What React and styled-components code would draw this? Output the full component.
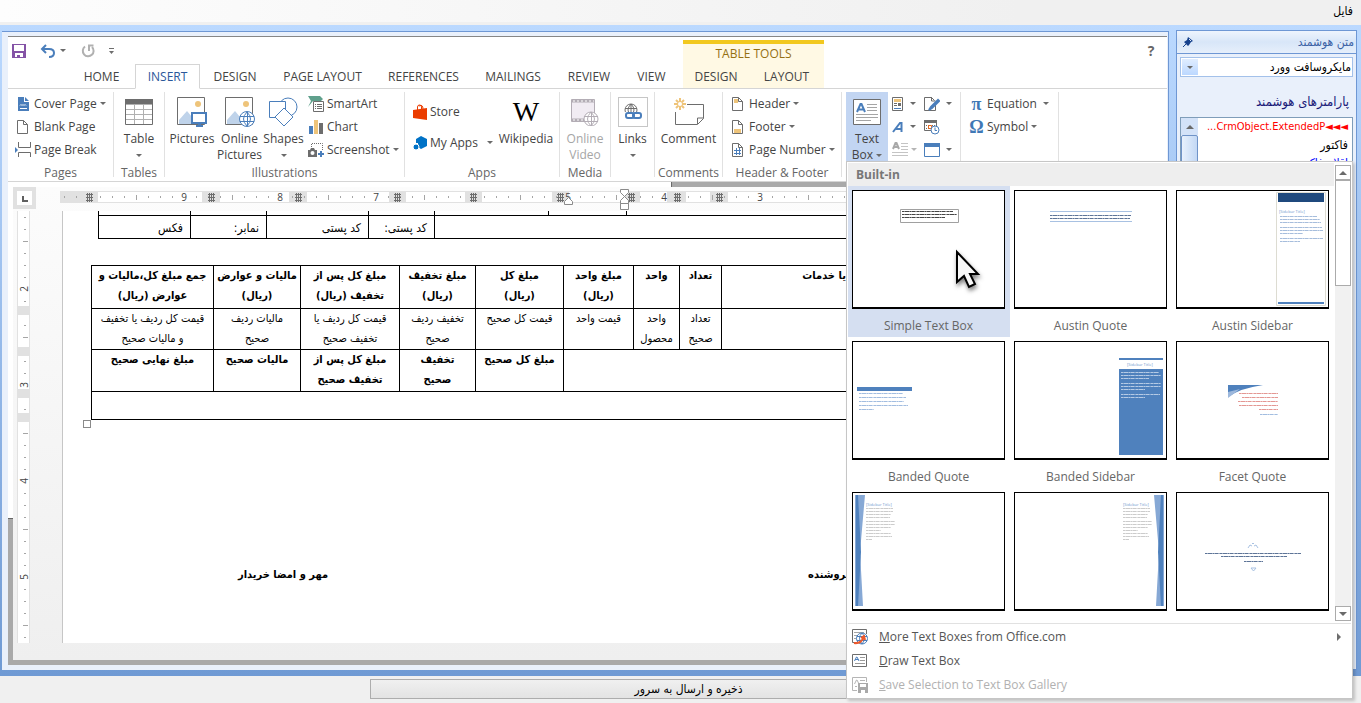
import React from "react";
import styled, { createGlobalStyle, css } from "styled-components";

const UI = '"Open Sans", "Noto Sans", sans-serif';
const FA = '"DejaVu Sans Condensed", "DejaVu Sans", sans-serif';

const GlobalStyle = createGlobalStyle`
  *, *::before, *::after { box-sizing: border-box; }
  body { margin: 0; font-family: ${UI}; font-size: 12px; color: #444; background: #f0f0f0; }
  button, select { font: inherit; color: inherit; }
  ul { list-style: none; margin: 0; padding: 0; }
`;

/* ---------- window shell ---------- */

const Shell = styled.div`
  display: flex;
  flex-direction: column;
  min-height: 100vh;
`;

const MenuBar = styled.nav`
  display: flex;
  justify-content: flex-end;
  align-items: center;
  height: 25px;
  padding: 0 8px;
  border-bottom: 3px solid #f0f0f0;
  background: linear-gradient(to right, #fdfdfd, #f0f0f0 75%);
  font-family: ${FA};
`;

const MenuBarItem = styled.button`
  border: 0;
  padding: 0;
  background: none;
  font-size: 12px;
  line-height: 16px;
  color: #000;
`;

const WorkArea = styled.main`
  flex: 1;
  display: flex;
  gap: 7px;
  padding: 5px 4px 6px 2px;
  background: linear-gradient(#bbd9ff, #6f9ad4);
`;

const EditorPane = styled.section`
  flex: 1;
  min-width: 0;
  display: flex;
  margin-top: 1px;
  padding: 4px 1px 5px 6px;
  border-top: 1px solid #6e97d4;
  border-right: 1px solid #6e97d4;
  background: #e9f0fb;
`;

const Word = styled.div`
  flex: 1;
  min-width: 0;
  display: flex;
  flex-direction: column;
  border-top: 1px solid #868686;
  background: #fff;
`;

const Footer = styled.footer`
  display: flex;
  justify-content: center;
  height: 27px;
  padding: 3px 0 4px 16px;
  background: #f0f0f0;
`;

const SaveButton = styled.button`
  width: 637px;
  max-width: 100%;
  padding: 0;
  border: 1px solid #adadad;
  background: linear-gradient(#f0f0f0, #e3e3e3);
  font-family: ${FA};
  font-size: 12px;
  line-height: 16px;
  color: #000;
`;

/* ---------- title row and tabs ---------- */

const TitleArea = styled.header`
  display: grid;
  grid-template-columns: 675px 141px 1fr;
  grid-template-rows: 27px 25px;
  background: linear-gradient(#d5d5d5, #d5d5d5) 0 100% / 100% 1px no-repeat;
`;

const QuickBar = styled.div`
  display: flex;
  align-items: center;
  padding: 0 0 0 4px;
`;

const QuickButton = styled.button`
  display: flex;
  align-items: center;
  gap: 4px;
  width: ${(p) => p.$w}px;
  height: 24px;
  padding: 0;
  border: 0;
  background: none;
`;

const HelpButton = styled.button`
  justify-self: end;
  width: 20px;
  margin-right: 6px;
  padding: 0;
  border: 0;
  background: none;
  font-size: 14px;
  font-weight: 700;
  color: #666;
`;

const Tabs = styled.div`
  display: flex;
  grid-column: 1;
  grid-row: 2;
  padding-left: 60px;
`;

const Tab = styled.button`
  width: ${(p) => p.$w}px;
  height: 25px;
  padding: 0;
  border: 1px solid transparent;
  background: none;
  font-size: 12px;
  line-height: 16px;
  color: #444;
  white-space: nowrap;
  ${(p) =>
    p.$active &&
    css`
      color: #2b579a;
      background: #fff;
      border-color: #d5d5d5;
      border-bottom-color: #fff;
    `}
`;

const ContextTabs = styled.div`
  grid-column: 2;
  grid-row: 1 / 3;
  display: flex;
  flex-direction: column;
  justify-content: space-between;
  margin: 3px 0 0;
  padding-bottom: 0;
  border-top: 4px solid #f2c81e;
  border-bottom: 1px solid #d5d5d5;
  background: #fff9e4;
`;

const ContextTitle = styled.div`
  font-size: 12px;
  line-height: 20px;
  text-align: center;
  color: #957012;
`;

const ContextRow = styled.div`
  display: flex;
  height: 24px;
`;

/* ---------- ribbon ---------- */

const Ribbon = styled.div`
  display: flex;
  padding: 3px 0 4px;
  border-bottom: 1px solid #d5d5d5;
`;

const Group = styled.section`
  flex: none;
  display: flex;
  flex-direction: column;
  width: ${(p) => p.$w}px;
  height: 85px;
  border-right: 1px solid #e1e1e1;
`;

const GroupBody = styled.div`
  flex: none;
  display: flex;
  height: 73px;
  padding-left: ${(p) => p.$pad || 0}px;
  justify-content: ${(p) => (p.$center ? "center" : "flex-start")};
`;

const GroupName = styled.h2`
  flex: none;
  margin: 0;
  font-size: 12px;
  font-weight: 400;
  line-height: 16px;
  text-align: center;
  color: #666;
  white-space: nowrap;
`;

const Stack = styled.div`
  display: flex;
  flex-direction: column;
  padding-top: ${(p) => p.$top || 0}px;
  margin-left: ${(p) => p.$left || 0}px;
`;

const SmallButton = styled.button`
  display: flex;
  align-items: center;
  gap: 3px;
  height: ${(p) => p.$h || 23}px;
  padding: 0;
  border: 0;
  background: none;
  font-size: 12px;
  line-height: 16px;
  color: ${(p) => (p.disabled ? "#a6a6a6" : "#444")};
  white-space: nowrap;
`;

const LargeButton = styled.button`
  display: flex;
  flex-direction: column;
  align-items: center;
  width: ${(p) => p.$w}px;
  height: 69px;
  padding: 4px 0 0;
  border: 0;
  background: ${(p) => (p.$on ? "#c2d5f2" : "none")};
  font-size: 12px;
  line-height: 16px;
  color: ${(p) => (p.disabled ? "#a6a6a6" : "#444")};
  white-space: nowrap;
`;

const LargeIcon = styled.span`
  flex: none;
  display: flex;
  align-items: center;
  justify-content: center;
  height: 32px;
  margin-bottom: 3px;
`;

const CaretLine = styled.span`
  flex: none;
  display: flex;
  align-items: center;
  gap: 3px;
  height: 16px;
`;

const Caret = styled.span`
  flex: none;
  width: 0;
  height: 0;
  margin-left: ${(p) => p.$gap || 0}px;
  border: 3px solid transparent;
  border-top-color: ${(p) => (p.$dim ? "#b5b5b5" : "#6a6a6a")};
  border-bottom: 0;
`;

const Glyph = styled.svg`
  flex: none;
  display: block;
`;

const SideRulerGlyph = styled(Glyph)`
  overflow: visible;
`;

const WikiMark = styled.span`
  font-family: "Liberation Serif", serif;
  font-size: 28px;
  line-height: 32px;
  color: #000;
`;

const LinkFrame = styled.span`
  display: flex;
  align-items: center;
  justify-content: center;
  width: 30px;
  height: 30px;
  border: 1px solid #c6c6c6;
`;

const MathMark = styled.span`
  width: 15px;
  font-family: "Liberation Serif", serif;
  font-size: 18px;
  font-weight: 700;
  line-height: 20px;
  color: #3f78b5;
`;

const MenuAnchor = styled.div`
  position: relative;
  height: 69px;
`;

/* ---------- text box gallery ---------- */

const Gallery = styled.div`
  position: absolute;
  z-index: 5;
  top: 100%;
  left: 0;
  width: 507px;
  padding: 1px;
  border: 1px solid #c6c6c6;
  background: #fff;
  box-shadow: 2px 2px 3px rgba(0, 0, 0, 0.2);
`;

const GalleryTop = styled.div`
  display: flex;
  height: 461px;
  margin-bottom: 1px;
  border-bottom: 1px solid #e1e1e1;
`;

const GalleryList = styled.div`
  width: 486px;
  overflow: hidden;
`;

const GalleryHeading = styled.h3`
  margin: 0;
  padding-left: 8px;
  font-size: 12px;
  line-height: 23px;
  font-weight: 700;
  color: #777;
  background: #eee;
`;

const GalleryGrid = styled.div`
  display: grid;
  grid-template-columns: repeat(3, 1fr);
`;

const Cell = styled.button`
  display: flex;
  flex-direction: column;
  align-items: center;
  height: 151px;
  padding: 4px 5px 0 4px;
  border: 0;
  background: ${(p) => (p.$on ? "#d5dff1" : "none")};
  font-size: 12px;
  line-height: 16px;
  color: #666;
`;

const Thumb = styled.svg`
  flex: none;
  display: block;
  width: 100%;
  height: 119px;
  margin-bottom: 9px;
  border: 1px solid #000;
  border-bottom-width: 2px;
  background: #fff;
  font-family: ${UI};
  overflow: visible;
`;

const Scroller = styled.div`
  display: flex;
  flex-direction: column;
  align-items: stretch;
  width: 16px;
  margin: 2px 0 0 1px;
  background: #f1f1f1;
  height: 456px;
`;

const ScrollButton = styled.button`
  display: flex;
  align-items: center;
  justify-content: center;
  height: 15px;
  padding: 0;
  border: 1px solid #ababab;
  background: #fff;
`;

const ScrollThumb = styled.div`
  height: 106px;
  margin-bottom: auto;
  border: 1px solid #ababab;
  background: #fff;
`;

const Command = styled.button`
  display: flex;
  align-items: center;
  gap: 11px;
  width: 100%;
  height: 24px;
  padding: 0 9px 0 4px;
  border: 0;
  background: none;
  font-size: 12px;
  line-height: 16px;
  color: ${(p) => (p.disabled ? "#b1b1b1" : "#555")};
  text-align: left;
`;

const CommandText = styled.span`
  flex: 1;
`;

/* ---------- document area ---------- */

const Band = styled.div`
  display: flex;
  height: 5px;
  padding-left: 663px;
`;

const BandFill = styled.div`
  flex: 1;
  border-left: 1px solid #6a6a6a;
  background: #a9a9a9;
`;

const Body = styled.div`
  flex: 1;
  display: flex;
  border-bottom: 5px solid #a9a9a9;
`;

const LeftStrip = styled.div`
  width: 5px;
  padding-top: 331px;
  background: #a9a9a9;
  background-clip: content-box;
`;

const StripFill = styled.div`
  height: 1px;
  background: #666;
`;

const Canvas = styled.div`
  flex: 1;
  min-width: 0;
  display: flex;
  flex-direction: column;
  padding-bottom: 17px;
  background: linear-gradient(#fcfcfc, #efefef);
`;

const RulerRow = styled.div`
  display: flex;
  height: 24px;
  gap: 24px;
  overflow: hidden;
`;

const TabSelector = styled.button`
  flex: none;
  width: 23px;
  height: 22px;
  padding: 0;
  border: 4px solid #e1e1e1;
  background: #fff;
`;

const RulerBox = styled.div`
  flex: 1;
  min-width: 0;
  overflow: hidden;
`;

const PageRow = styled.div`
  flex: 1;
  display: flex;
`;

const SideRuler = styled.div`
  flex: none;
  width: 13px;
  margin: 0 32px 0 4px;
  border: solid #e1e1e1;
  border-width: 0 1px;
  background: #fff;
`;

const Page = styled.article`
  flex: 1;
  min-width: 0;
  overflow: hidden;
  border-left: 1px solid #c6c6c6;
  background: #fff;
  font-family: ${FA};
  color: #000;
`;

const DocTable = styled.table`
  table-layout: fixed;
  border-collapse: collapse;
  width: calc(100% - ${(p) => p.$inset * 2}px);
  margin: ${(p) => p.$top}px 0 0 ${(p) => p.$inset}px;
`;

const Row = styled.tr`
  height: ${(p) => p.$h}px;
`;

const Td = styled.td`
  direction: rtl;
  padding: ${(p) => (p.$contact ? "2px 7px 0" : "0")};
  border: 1px solid #000;
  ${(p) => p.$cut && "border-top: 0;"}
  font-size: ${(p) => (p.$contact ? 12 : 11)}px;
  font-weight: ${(p) => (p.$bold ? 700 : 400)};
  line-height: 20px;
  text-align: ${(p) => (p.$contact ? "right" : "center")};
  vertical-align: ${(p) => (p.$contact ? "middle" : "top")};
  white-space: nowrap;
`;

const TableHandle = styled.div`
  width: 8px;
  height: 8px;
  margin-left: 20px;
  border: 1px solid #8a8a8a;
`;

const Signatures = styled.div`
  display: flex;
  gap: 480px;
  margin-top: 137px;
  padding-left: 175px;
  direction: ltr;
`;

const Signature = styled.p`
  margin: 0;
  direction: rtl;
  font-size: 11px;
  font-weight: 700;
  line-height: 20px;
  white-space: nowrap;
`;

/* ---------- smart text pane ---------- */

const SidePane = styled.aside`
  flex: none;
  display: flex;
  flex-direction: column;
  width: 181px;
  border: 1px solid #6e97d4;
  background: #e9f0fb;
  font-family: ${FA};
  direction: rtl;
`;

const PaneTitle = styled.header`
  display: flex;
  align-items: center;
  justify-content: space-between;
  height: 23px;
  padding: 0 2px 0 5px;
  border-bottom: 1px solid #6e97d4;
  background: linear-gradient(to bottom, #eef4fd, #d8e6f8 50%, #e6effb);
  font-size: 12px;
  color: #3b62a5;
`;

const PaneBody = styled.div`
  flex: 1;
  display: flex;
  flex-direction: column;
  padding: 3px 3px 5px 3px;
`;

const ComboFrame = styled.div`
  display: flex;
  align-items: center;
  height: 20px;
  padding: 1px;
  border: 1px solid #a3c1ea;
  background: #fff;
`;

const Combo = styled.select`
  flex: 1;
  min-width: 0;
  appearance: none;
  padding: 0;
  border: 0;
  background: none;
  font-size: 12px;
  color: #000;
`;

const ComboArrow = styled.span`
  display: flex;
  align-items: center;
  justify-content: center;
  width: 16px;
  height: 16px;
  background: linear-gradient(#e0edff, #bcd8ff);
`;

const PaneLabel = styled.div`
  padding: 15px 4px 5px;
  font-size: 13px;
  line-height: 20px;
  color: #1a1a78;
`;

const ListFrame = styled.div`
  flex: 1;
  display: flex;
  border: 1px solid #7f9db9;
  background: #fff;
`;

const Items = styled.ul`
  flex: 1;
  min-width: 0;
  padding: 0 4px;
`;

const Item = styled.li`
  height: 18px;
  font-size: ${(p) => (p.$latin ? 11 : 12)}px;
  line-height: 18px;
  color: ${(p) => p.$color};
  white-space: nowrap;
`;

const ListScroll = styled.div`
  width: 17px;
  background: #edf3fc;
`;

const ListUp = styled.button`
  display: flex;
  align-items: center;
  justify-content: center;
  width: 17px;
  height: 17px;
  padding: 0;
  border: 0;
  background: #d3e2f8;
`;

const ListThumb = styled.div`
  height: 90px;
  border: 1px solid #6f93c8;
  border-radius: 2px;
  background: linear-gradient(to right, #e8f1fd, #c3d8f4);
`;

/* ---------- icons ---------- */

const BLUE = "#4a7ebb";
const INK = "#6d6d6d";

const Svg = ({ w, h, children, ...rest }) => (
  <Glyph width={w} height={h} viewBox={`0 0 ${w} ${h}`} fill="none" aria-hidden="true" {...rest}>
    {children}
  </Glyph>
);

const PageShape = ({ children, stroke = INK }) => (
  <Svg w={16} h={16}>
    <path d="M2.500 1.500h6l4 4v9h-10z M8.500 1.500v4h4" stroke={stroke} />
    {children}
  </Svg>
);

const icons = {
  save: (
    <Svg w={14} h={14}>
      <path d="M0 0h14v14H0z" fill="#8453a6" />
      <path d="M2 1h10v6H2zM3 9h8v4H3z" fill="#fff" />
      <path d="M5 11h3v3H5z" fill="#8453a6" />
    </Svg>
  ),
  undo: (
    <Svg w={16} h={14}>
      <path d="M6 1L2 5l4 4M2 5h7q5 0 5 4t-5 4" stroke={BLUE} strokeWidth="2" />
    </Svg>
  ),
  redo: (
    <Svg w={14} h={14}>
      <path d="M4 2.500A5.400 5.400 0 1 0 11 3" stroke="#b1b1b1" strokeWidth="2" />
      <path d="M7 1.500h5.500M8 1v6" stroke="#b1b1b1" strokeWidth="2" />
    </Svg>
  ),
  customise: (
    <Svg w={7} h={8}>
      <path d="M1 1.500h5" stroke={INK} />
      <path d="M1 4h5L3.500 7z" fill={INK} />
    </Svg>
  ),
  cover: (
    <Svg w={16} h={16}>
      <path d="M3 1h6v5h5v9H3z" fill={BLUE} />
      <path d="M10 1l4 4h-4z" fill={BLUE} />
      <path d="M5 9.500l1-1 1 1 1-1 1 1 1-1 1 1M5 12.500h7" stroke="#fff" />
    </Svg>
  ),
  blank: <PageShape />,
  pageBreak: (
    <Svg w={16} h={16}>
      <path d="M3.500 0v5.500h12V0M3.500 15v-4.500h12V15" stroke={INK} />
      <path d="M0 5l3 3-3 3z" fill={BLUE} />
    </Svg>
  ),
  table: (
    <Svg w={28} h={26}>
      <path d="M.5.5h27v25H.5z" fill="#fff" stroke={INK} />
      <path d="M1 5.500h26M1 10.500h26M1 15.500h26M1 20.500h26M9.500 5v20M18.500 5v20" stroke="#b0b0b0" />
      <path d="M0 0h28v5H0z" fill={INK} />
    </Svg>
  ),
  pictures: (
    <Svg w={30} h={30}>
      <path d="M.5.5h27v27H.5z" fill="#fff" stroke={INK} />
      <circle cx="21" cy="7" r="3" fill="#eec47a" />
      <path d="M2 27V23l8-9 5 6v7z" fill="#bfd3ea" />
      <path d="M15 16h14v10H15z" fill="#fff" stroke={BLUE} strokeWidth="2" />
      <path d="M21 26h3v2h2v2h-7v-2h2z" fill={BLUE} />
    </Svg>
  ),
  onlinePictures: (
    <Svg w={30} h={30}>
      <path d="M.5.5h27v27H.5z" fill="#fff" stroke={INK} />
      <circle cx="21" cy="7" r="3" fill="#eec47a" />
      <path d="M2 27V23l8-9 5 6v7z" fill="#bfd3ea" />
      <circle cx="22" cy="22" r="7.500" fill="#fff" stroke={BLUE} />
      <path d="M15 19.500h14M15 24.500h14M22.500 15v14M22 15q-7 7 0 14q7-7 0-14" stroke={BLUE} />
    </Svg>
  ),
  shapes: (
    <Svg w={30} h={30}>
      <circle cx="19" cy="10" r="9" fill="#fff" stroke={BLUE} />
      <path d="M.5 4.500h16v16H.5z" fill="#fff" stroke={BLUE} />
      <path d="M15 11l9 9-9 9-9-9z" fill="#fff" stroke={BLUE} />
    </Svg>
  ),
  smartArt: (
    <Svg w={16} h={16}>
      <path d="M0 0h12l3 3-2 2H5L0 11l3-6z" fill="#5fa08c" />
      <path d="M5.500 5.500h10v10h-10z" fill="#fff" stroke={INK} />
      <path d="M7 8.500h1M9 8.500h5M7 10.500h1M9 10.500h5M7 12.500h1M9 12.500h5" stroke={INK} />
    </Svg>
  ),
  chart: (
    <Svg w={16} h={16}>
      <path d="M1 7h4v8H1z" fill={BLUE} />
      <path d="M6 1h4v14H6z" fill="#eec47a" />
      <path d="M11 4h4v11h-4z" fill={INK} />
    </Svg>
  ),
  screenshot: (
    <Svg w={16} h={16}>
      <path d="M3.500 5V1.500h11V9" stroke={INK} strokeDasharray="1 1" />
      <path d="M0 8h2l1-2h3l1 2h2v7H0z" fill={INK} />
      <circle cx="4.500" cy="11" r="2" fill="#fff" />
      <path d="M13 9v6M10 12h6" stroke={BLUE} strokeWidth="2" />
    </Svg>
  ),
  store: (
    <Svg w={14} h={16}>
      <path d="M0 6l14-2v12L0 14z" fill="#eb3c00" />
      <path d="M4.500 6V3q0-2 2-2t2 2v2M6 2q4-2 4 3" stroke="#eb3c00" />
    </Svg>
  ),
  myApps: (
    <Svg w={14} h={14}>
      <path d="M8 0l6 3v7l-6 3-3-2V7H3V3z" fill="#0072c6" />
      <circle cx="3" cy="11" r="3" fill="#0072c6" stroke="#fff" />
    </Svg>
  ),
  video: (
    <Svg w={28} h={28}>
      <path d="M.5 1.500h23v22H.5z" fill="#f1ecf3" stroke="#b3adb5" />
      <path d="M1 3h22M1 22h22" stroke="#b3adb5" strokeWidth="3" />
      <path d="M2 3h21M2 22h21" stroke="#fff" strokeDasharray="2 2" />
      <circle cx="20" cy="21" r="7" fill="#fff" stroke="#b3adb5" />
      <path d="M13 18.500h14M13 23.500h14M20.500 14v14M20 14q-7 7 0 14q7-7 0-14" stroke="#b3adb5" />
    </Svg>
  ),
  links: (
    <Svg w={18} h={18}>
      <circle cx="7" cy="7" r="6" stroke={INK} />
      <path d="M1 5.500h12M1 9.500h12M7 1v12M7 1q-6 6 0 12M7 1q6 6 0 12" stroke={INK} />
      <path d="M1 9h17v8H1z" fill="#fff" />
      <rect x="2" y="10" width="8" height="5" rx="2" stroke={BLUE} strokeWidth="2" />
      <rect x="9" y="10" width="8" height="5" rx="2" stroke={BLUE} strokeWidth="2" />
    </Svg>
  ),
  comment: (
    <Svg w={32} h={28}>
      <path d="M14 6.500h16.500v14l-6 6h-22V14M24.500 26v-6h6" stroke={INK} />
      <path d="M7 0v12M1 6h12M3 2l8 8M11 2l-8 8" stroke="#eec47a" strokeWidth="2" />
      <circle cx="7" cy="6" r="2" fill="#fff" />
    </Svg>
  ),
  header: (
    <PageShape>
      <path d="M4 3h4v4H4z" fill="#eec47a" />
    </PageShape>
  ),
  footer: (
    <PageShape>
      <path d="M4 10h7v4H4z" fill="#eec47a" />
    </PageShape>
  ),
  pageNumber: (
    <PageShape>
      <path d="M6.500 6v7M9.500 6v7M4 8.500h7M4 11.500h7" stroke={BLUE} />
    </PageShape>
  ),
  quickParts: (
    <Svg w={12} h={16}>
      <path d="M.5 1.500h10v13H.5z" fill="#fff" stroke={INK} />
      <path d="M2 3h7v3H2z" fill="#eec47a" />
      <path d="M2 7.500h3M2 9.500h3" stroke={INK} />
      <path d="M6 7h3v3H6z" fill={INK} />
      <path d="M2 12h7v1H2z" fill={BLUE} />
    </Svg>
  ),
  signature: (
    <Svg w={16} h={16}>
      <path d="M11.500 9v5.500h-11v-13h7l3 3M7.500 1v4h4" stroke={INK} />
      <path d="M14 4L7 11l-2 3 3-2 7-7z" stroke={BLUE} strokeWidth="2" />
    </Svg>
  ),
  dateTime: (
    <Svg w={16} h={16}>
      <path d="M.5 2.500h12v9H.5z" fill="#fff" stroke={INK} />
      <path d="M0 1h13v3H0z" fill={INK} />
      <path d="M2 6.500h9M2 9.500h9" stroke={INK} strokeDasharray="1 1" />
      <path d="M4.500 6.500h3v3h-3z" stroke="#eb6a1e" />
      <circle cx="11" cy="11" r="4" fill="#fff" stroke={BLUE} />
      <path d="M11 8.500V11.500h2" stroke={BLUE} />
    </Svg>
  ),
  object: (
    <Svg w={16} h={14}>
      <path d="M.5.5h15v13H.5z" fill="#fff" stroke={BLUE} />
      <path d="M0 0h16v4H0z" fill={BLUE} />
    </Svg>
  ),
  textBox: (
    <Svg w={28} h={26}>
      <path d="M.5.5h27v25H.5z" fill="#fff" stroke={INK} />
      <path d="M4 13L7.500 5h1L12 13M5.500 10.500h5" stroke={BLUE} strokeWidth="2" />
      <path d="M14 5.500h10M14 8.500h10M14 11.500h10M3 15.500h22M3 18.500h22M3 21.500h15" stroke="#a5a5a5" />
    </Svg>
  ),
  wordArt: (
    <Svg w={12} h={12}>
      <path d="M1 11L8 2h1.500v9M4 8h5" stroke={BLUE} strokeWidth="2" />
    </Svg>
  ),
  dropCap: (
    <Svg w={16} h={16}>
      <path d="M1 7L3.500 1h1L7 7M2 5h4" stroke="#a8a8a8" strokeWidth="2" />
      <path d="M9 1.500h7M9 4.500h7M9 7.500h7M0 10.500h16M0 13.500h16" stroke="#c4c4c4" />
    </Svg>
  ),
  office: (
    <Svg w={16} h={16}>
      <path d="M.5 13.500V.5h14V5M.5 13.500H5" stroke={INK} />
      <path d="M2 3.500h10M2 6.500h4M2 9.500h3" stroke="#a5a5a5" />
      <circle cx="10" cy="9.500" r="5.500" fill="#fff" stroke={BLUE} />
      <path d="M5 7.500h10M5 11.500h10M10 4q-5 5 0 11M10 4q5 5 0 11" stroke={BLUE} />
      <path d="M2 14q7 1 10-6M9 9l3-2 1 4" stroke="#eb5a2e" strokeWidth="2" />
    </Svg>
  ),
  drawBox: (
    <Svg w={16} h={14}>
      <path d="M.5.5h14v12H.5z" fill="#fff" stroke={INK} />
      <path d="M2.500 7L4.500 3h.5L7 7M3 5.500h3.500" stroke={BLUE} />
      <path d="M8 3.500h5M8 6.500h5M3 9.500h10" stroke="#9a9a9a" />
    </Svg>
  ),
  saveBox: (
    <Svg w={16} h={16}>
      <path d="M5 13.500H.5V.5h14V5" stroke="#b5b5b5" />
      <path d="M2.500 7L4.500 3h.5L7 7M8 3.500h5M3 9.500h2" stroke="#b5b5b5" />
      <path d="M6 6h10v10H6z" fill="#a9a9a9" />
      <path d="M8 7h6v3H8zM9 13h4v3H9z" fill="#fff" />
    </Svg>
  ),
  pin: (
    <Svg w={12} h={12}>
      <path d="M6 1l5 4-2 1-2 3-1 1-4-4 3-2z" fill="#16418c" />
      <path d="M4 8l-3 3" stroke="#16418c" />
      <path d="M7 3l2 2" stroke="#dbe8fa" />
    </Svg>
  ),
};

const Triangle = ({ dir }) => (
  <Svg w={8} h={6}>
    <path d={dir === "up" ? "M0 5h8L4 1z" : "M0 1h8L4 5z"} fill="#6a6a6a" />
  </Svg>
);

/* ---------- rulers ---------- */

const H_WHITE = [
  [38, 104],
  [160, 69],
  [247, 82],
  [346, 59],
  [422, 70],
  [509, 55],
  [580, 27],
  [626, 24],
  [668, 440],
];
const H_NUMBERS = [[124, "9"], [220, "8"], [316, "7"], [508, "5"], [604, "4"], [700, "3"], [796, "2"]];
const STOP_CENTERS = [29, 151, 238, 337, 413, 500, 571, 617, 659];

const range = (n) => Array.from({ length: n }, (_, i) => i);

const HorizontalRuler = () => (
  <Glyph width="1100" height="24" viewBox="0 0 1100 24" fill="none" aria-hidden="true">
    <path d="M0 4h1100v12H0z" fill="#e1e1e1" />
    {H_WHITE.map(([x, w]) => (
      <path key={x} d={`M${x} 5h${w}v10h-${w}z`} fill="#fff" />
    ))}
    {range(88).map((i) => {
      const x = 4 + i * 12;
      const step = (i + 6) % 8;
      if (step === 0) return null;
      return <path key={i} d={step === 4 ? `M${x + 0.5} 8v5` : `M${x + 0.5} 9v2`} stroke="#a5a5a5" />;
    })}
    {H_NUMBERS.map(([x, n]) => (
      <text key={n} x={x} y="14" fontFamily="Open Sans" fontSize="10" textAnchor="middle" fill="#444">
        {n}
      </text>
    ))}
    {STOP_CENTERS.map((x) => (
      <path
        key={x}
        d={`M${x - 3} 7.500h7M${x - 3} 10.500h7M${x - 3} 13.500h7M${x - 1.5} 6v9M${x + 0.5} 6v9M${x + 2.5} 6v9`}
        stroke="#6d6d6d"
      />
    ))}
    <path d="M504.500 17.500v-3l4-4 4 4v3z" fill="#fff" stroke="#8a8a8a" />
    <path d="M560.500 2.500h8v3l-4 4-4-4zM560.500 16.500v-3l4-4 4 4v3zM560.500 16.500h8v6h-8z" fill="#fff" stroke="#8a8a8a" />
  </Glyph>
);

const V_NUMBERS = [[78, "2"], [174, "3"], [270, "4"], [366, "5"]];
const V_BREAKS = [95, 136, 178, 202];

const VerticalRuler = () => (
  <SideRulerGlyph width="11" height="432" viewBox="0 0 11 432" fill="none" aria-hidden="true">
    {V_BREAKS.map((y) => (
      <path key={y} d={`M0 ${y}h11v9H0z`} fill="#e1e1e1" />
    ))}
    {range(36).map((i) => {
      const y = 6 + i * 12;
      const step = (i + 2) % 8;
      if (step === 0 || V_BREAKS.some((b) => y >= b && y <= b + 9)) return null;
      return <path key={i} d={step === 4 ? `M5 ${y + 0.5}h5` : `M6 ${y + 0.5}h2`} stroke="#a5a5a5" />;
    })}
    {V_NUMBERS.map(([y, n]) => (
      <text key={n} transform={`translate(10 ${y}) rotate(-90)`} fontFamily="Open Sans" fontSize="10" textAnchor="middle" fill="#444">
        {n}
      </text>
    ))}
  </SideRulerGlyph>
);

/* ---------- gallery pictures ---------- */

const Scribble = ({ x, y, widths, step = 3, color, weight = 1, end }) => (
  <g stroke={color} strokeWidth={weight}>
    {widths.map((w, i) => (
      <g key={i}>
        <path d={`M${end ? x - w : x} ${y + i * step + 0.5}h${w}`} opacity="0.450" />
        <path d={`M${end ? x - w : x} ${y + i * step + 0.5}h${w}`} strokeDasharray="2 1 4 1 1 1 3 2" opacity="0.500" />
      </g>
    ))}
  </g>
);

const TinyTitle = ({ x, y, children }) => (
  <text x={x} y={y} fontSize="4" fill="#6f98ce">
    {children}
  </text>
);

const Cursor = () => (
  <g filter="drop-shadow(1px 3px 2px rgba(0,0,0,0.5))">
    <path d="M105 62v30l7-6 5 11 6-3-5-10h8z" fill="#f8f8f8" stroke="#000" strokeWidth="2" />
  </g>
);

const thumbs = [
  {
    name: "Simple Text Box",
    on: true,
    art: (
      <>
        <path d="M48.500 19.500h58v13h-58z" stroke="#a0a0a0" />
        <Scribble x={50} y={21} widths={[51, 55, 43]} color="#000" />
        <Cursor />
      </>
    ),
  },
  {
    name: "Austin Quote",
    art: (
      <>
        <path d="M36 21.500h82M36 31.500h82" stroke="#a8c1e2" />
        <Scribble x={36} y={25} widths={[81, 80]} color="#1f3f70" />
      </>
    ),
  },
  {
    name: "Austin Sidebar",
    art: (
      <>
        <path d="M100.500 2.500h49v113h-49z" fill="#fff" stroke="#dddcd2" />
        <path d="M102 3h46v9h-46z" fill="#1f497d" />
        <TinyTitle x={103} y={23}>[Sidebar Title]</TinyTitle>
        <Scribble x={104} y={26} widths={[37, 40, 41]} color="#84a4cf" />
        <Scribble x={104} y={37} widths={[42, 43, 23]} color="#84a4cf" />
        <Scribble x={104} y={48} widths={[43, 20]} color="#84a4cf" />
        <path d="M102 112h46v2h-46z" fill="#4f81bd" />
      </>
    ),
  },
  {
    name: "Banded Quote",
    art: (
      <>
        <path d="M5 46h55v4H5z" fill="#4f81bd" />
        <Scribble x={7} y={52} widths={[44, 47, 45, 49, 15]} step={4} color="#7fa4d4" />
      </>
    ),
  },
  {
    name: "Banded Sidebar",
    art: (
      <>
        <path d="M105 17h44v2h-44zM105 28h44v86h-44z" fill="#4f81bd" />
        <TinyTitle x={113} y={25}>[Sidebar Title]</TinyTitle>
        <Scribble x={107} y={31} widths={[38, 40, 28]} color="#dce6f4" />
        <Scribble x={107} y={42} widths={[40, 40, 24]} color="#dce6f4" />
        <Scribble x={107} y={53} widths={[39, 24]} color="#dce6f4" />
      </>
    ),
  },
  {
    name: "Facet Quote",
    art: (
      <>
        <path d="M52 44h35q-22 3-35 12z" fill="#4f81bd" />
        <path d="M52 51l12-3-12 9z" fill="#9db8dc" />
        <Scribble x={102} y={52} widths={[39, 36, 40, 39, 19]} step={4} color="#d9706a" end />
        <Scribble x={102} y={73} widths={[18]} color="#7fa4d4" end />
      </>
    ),
  },
  {
    label: "Side line left",
    art: (
      <>
        <path d="M3 3h10L8 60l3 54H3z" fill="#86a8d5" />
        <path d="M4 3h2l3 57-3 54H4z" fill="#4f81bd" />
        <TinyTitle x={14} y={14}>[Sidebar Title]</TinyTitle>
        <Scribble x={14} y={16} widths={[27, 27, 25, 24]} color="#b9b9b9" />
        <Scribble x={14} y={29} widths={[29, 29, 25, 15]} color="#b9b9b9" />
        <Scribble x={14} y={41} widths={[25, 26, 6]} color="#b9b9b9" />
      </>
    ),
  },
  {
    label: "Side line right",
    art: (
      <>
        <path d="M150 3h-10l5 57-3 54h8z" fill="#86a8d5" />
        <path d="M149 3h-2l-3 57 3 54h2z" fill="#4f81bd" />
        <TinyTitle x={109} y={14}>[Sidebar Title]</TinyTitle>
        <Scribble x={109} y={16} widths={[27, 27, 25, 24]} color="#b9b9b9" />
        <Scribble x={109} y={29} widths={[29, 29, 25, 15]} color="#b9b9b9" />
        <Scribble x={109} y={41} widths={[25, 26, 6]} color="#b9b9b9" />
      </>
    ),
  },
  {
    label: "Ornate quote",
    art: (
      <>
        <path d="M72 56l2-3 2 1M82 56l-2-3-2 1M76 52l1-1 1 1M75 76h5l-2.500 3z" stroke="#a8c1e2" />
        <Scribble x={29} y={61} widths={[96]} color="#1f3f70" />
        <Scribble x={45} y={64} widths={[66]} color="#1f3f70" />
        <Scribble x={68} y={69} widths={[19]} color="#1f3f70" />
      </>
    ),
  },
];

/* ---------- invoice table data ---------- */

const invoiceCols = [122, 87, 99, 76, 88, 70, 46, 42, 252, 70];

const headerCells = [
  ["جمع مبلغ کل،مالیات و", "عوارض (ریال)"],
  ["مالیات و عوارض", "(ریال)"],
  ["مبلغ کل پس از", "تخفیف (ریال)"],
  ["مبلغ تخفیف", "(ریال)"],
  ["مبلغ کل", "(ریال)"],
  ["مبلغ واحد", "(ریال)"],
  ["واحد"],
  ["تعداد"],
  ["شرح کالا یا خدمات"],
  [],
  [],
];

const itemCells = [
  ["قیمت کل ردیف یا تخفیف", "و مالیات صحیح"],
  ["مالیات ردیف", "صحیح"],
  ["قیمت کل ردیف یا", "تخفیف صحیح"],
  ["تخفیف ردیف", "صحیح"],
  ["قیمت کل صحیح"],
  ["قیمت واحد"],
  ["واحد", "محصول"],
  ["تعداد", "صحیح"],
  [],
  [],
  [],
];

const totalCells = [
  ["مبلغ نهایی صحیح"],
  ["مالیات صحیح"],
  ["مبلغ کل پس از", "تخفیف صحیح"],
  ["تخفیف", "صحیح"],
  ["مبلغ کل صحیح"],
];

const Lines = ({ lines }) =>
  lines.map((line, i) => (
    <React.Fragment key={i}>
      {i > 0 && <br />}
      {line}
    </React.Fragment>
  ));

const Cells = ({ rows, bold }) =>
  rows.map((lines, i) => (
    <Td key={i} $bold={bold}>
      <Lines lines={lines} />
    </Td>
  ));

/* ---------- sections ---------- */

const mainTabs = [
  ["HOME", 67],
  ["INSERT", 65],
  ["DESIGN", 70],
  ["PAGE LAYOUT", 105],
  ["REFERENCES", 97],
  ["MAILINGS", 82],
  ["REVIEW", 70],
  ["VIEW", 55],
];

const Small = ({ icon, children, caret, ...rest }) => (
  <SmallButton {...rest}>
    {icon}
    {children}
    {caret && <Caret />}
  </SmallButton>
);

const Large = ({ icon, lines, caret, ...rest }) => (
  <LargeButton {...rest}>
    <LargeIcon>{icon}</LargeIcon>
    {lines.map((l) => (
      <span key={l}>{l}</span>
    ))}
    {caret && (
      <CaretLine>
        <Caret />
      </CaretLine>
    )}
  </LargeButton>
);

const TextBoxGallery = () => (
  <Gallery role="menu">
    <GalleryTop>
      <GalleryList>
        <GalleryHeading>Built-in</GalleryHeading>
        <GalleryGrid>
          {thumbs.map((t) => (
            <Cell key={t.name || t.label} $on={t.on} aria-label={t.label}>
              <Thumb viewBox="1 1 151 116" preserveAspectRatio="xMinYMin meet" fill="none">
                {t.art}
              </Thumb>
              {t.name}
            </Cell>
          ))}
        </GalleryGrid>
      </GalleryList>
      <Scroller>
        <ScrollButton aria-label="Scroll up">
          <Triangle dir="up" />
        </ScrollButton>
        <ScrollThumb />
        <ScrollButton aria-label="Scroll down">
          <Triangle dir="down" />
        </ScrollButton>
      </Scroller>
    </GalleryTop>
    <Command>
      {icons.office}
      <CommandText>
        <u>M</u>ore Text Boxes from Office.com
      </CommandText>
      <Svg w={5} h={8}>
        <path d="M0 0v8l4-4z" fill={INK} />
      </Svg>
    </Command>
    <Command>
      {icons.drawBox}
      <CommandText>
        <u>D</u>raw Text Box
      </CommandText>
    </Command>
    <Command disabled>
      {icons.saveBox}
      <CommandText>
        <u>S</u>ave Selection to Text Box Gallery
      </CommandText>
    </Command>
  </Gallery>
);

const RibbonBar = () => (
  <Ribbon>
    <Group $w={106}>
      <GroupBody $pad={7}>
        <Stack>
          <Small icon={icons.cover} caret>Cover Page</Small>
          <Small icon={icons.blank}>Blank Page</Small>
          <Small icon={icons.pageBreak}>Page Break</Small>
        </Stack>
      </GroupBody>
      <GroupName>Pages</GroupName>
    </Group>
    <Group $w={51}>
      <GroupBody $center>
        <Large $w={48} icon={icons.table} lines={["Table"]} caret />
      </GroupBody>
      <GroupName>Tables</GroupName>
    </Group>
    <Group $w={240}>
      <GroupBody $pad={3}>
        <Large $w={48} icon={icons.pictures} lines={["Pictures"]} />
        <Large $w={47} icon={icons.onlinePictures} lines={["Online", "Pictures"]} />
        <Large $w={41} icon={icons.shapes} lines={["Shapes"]} caret />
        <Stack $left={4}>
          <Small icon={icons.smartArt}>SmartArt</Small>
          <Small icon={icons.chart}>Chart</Small>
          <Small icon={icons.screenshot} caret>Screenshot</Small>
        </Stack>
      </GroupBody>
      <GroupName>Illustrations</GroupName>
    </Group>
    <Group $w={155}>
      <GroupBody $pad={8}>
        <Stack $top={4}>
          <Small $h={31} icon={icons.store}>Store</Small>
          <SmallButton $h={31}>
            {icons.myApps}
            My Apps
            <Caret $gap={6} />
          </SmallButton>
        </Stack>
        <Large $w={66} icon={<WikiMark>W</WikiMark>} lines={["Wikipedia"]} />
      </GroupBody>
      <GroupName>Apps</GroupName>
    </Group>
    <Group $w={51}>
      <GroupBody $center>
        <Large $w={48} icon={icons.video} lines={["Online", "Video"]} disabled />
      </GroupBody>
      <GroupName>Media</GroupName>
    </Group>
    <Group $w={44}>
      <GroupBody $center>
        <Large $w={42} icon={<LinkFrame>{icons.links}</LinkFrame>} lines={["Links"]} caret />
      </GroupBody>
    </Group>
    <Group $w={68}>
      <GroupBody $center>
        <Large $w={64} icon={icons.comment} lines={["Comment"]} />
      </GroupBody>
      <GroupName>Comments</GroupName>
    </Group>
    <Group $w={119}>
      <GroupBody $pad={7}>
        <Stack>
          <Small icon={icons.header} caret>Header</Small>
          <Small icon={icons.footer} caret>Footer</Small>
          <Small icon={icons.pageNumber} caret>Page Number</Small>
        </Stack>
      </GroupBody>
      <GroupName>Header &amp; Footer</GroupName>
    </Group>
    <Group $w={119}>
      <GroupBody $pad={4}>
        <MenuAnchor>
          <LargeButton $w={42} $on aria-haspopup="menu" aria-expanded="true">
            <LargeIcon>{icons.textBox}</LargeIcon>
            <span>Text</span>
            <CaretLine>
              Box
              <Caret />
            </CaretLine>
          </LargeButton>
          <TextBoxGallery />
        </MenuAnchor>
        <Stack $left={4}>
          <SmallButton aria-label="Quick Parts">
            {icons.quickParts}
            <Caret $gap={3} />
          </SmallButton>
          <SmallButton aria-label="WordArt">
            {icons.wordArt}
            <Caret $gap={3} />
          </SmallButton>
          <SmallButton aria-label="Drop Cap" disabled>
            {icons.dropCap}
            <Caret $dim />
          </SmallButton>
        </Stack>
        <Stack $left={7}>
          <SmallButton aria-label="Signature Line">
            {icons.signature}
            <Caret $gap={3} />
          </SmallButton>
          <SmallButton aria-label="Date and Time">{icons.dateTime}</SmallButton>
          <SmallButton aria-label="Object">
            {icons.object}
            <Caret $gap={3} />
          </SmallButton>
        </Stack>
      </GroupBody>
    </Group>
    <Group $w={98}>
      <GroupBody $pad={8}>
        <Stack>
          <SmallButton>
            <MathMark>π</MathMark>
            Equation
            <Caret $gap={3} />
          </SmallButton>
          <SmallButton>
            <MathMark>Ω</MathMark>
            Symbol
            <Caret />
          </SmallButton>
        </Stack>
      </GroupBody>
    </Group>
  </Ribbon>
);

const Document = () => (
  <Page>
    <DocTable $inset={35} $top={0}>
      <colgroup>
        {[92, 76, 102, 66, 114, 78].map((w, i) => (
          <col key={i} width={w} />
        ))}
        <col />
      </colgroup>
      <tbody>
        <Row $h={4}>
          {range(7).map((i) => (
            <Td key={i} $cut />
          ))}
        </Row>
        <Row $h={23}>
          <Td $contact>فکس</Td>
          <Td $contact>نمابر:</Td>
          <Td $contact>کد پستی</Td>
          <Td $contact>کد پستی:</Td>
          <Td colSpan={3} />
        </Row>
      </tbody>
    </DocTable>
    <DocTable $inset={28} $top={26}>
      <colgroup>
        {invoiceCols.map((w, i) => (
          <col key={i} width={w} />
        ))}
        <col />
      </colgroup>
      <tbody>
        <Row $h={43}>
          <Cells rows={headerCells} bold />
        </Row>
        <Row $h={41}>
          <Cells rows={itemCells} />
        </Row>
        <Row $h={42}>
          <Cells rows={totalCells} bold />
          <Td colSpan={6} />
        </Row>
        <Row $h={28}>
          <Td colSpan={11} />
        </Row>
      </tbody>
    </DocTable>
    <TableHandle />
    <Signatures>
      <Signature>مهر و امضا خریدار</Signature>
      <Signature>مهر و امضا فروشنده</Signature>
    </Signatures>
  </Page>
);

export default function App() {
  return (
    <Shell>
      <GlobalStyle />
      <MenuBar>
        <MenuBarItem>فایل</MenuBarItem>
      </MenuBar>
      <WorkArea>
        <EditorPane>
          <Word>
            <TitleArea>
              <QuickBar>
                <QuickButton $w={28} aria-label="Save">{icons.save}</QuickButton>
                <QuickButton $w={41} aria-label="Undo">
                  {icons.undo}
                  <Caret />
                </QuickButton>
                <QuickButton $w={27} aria-label="Redo">{icons.redo}</QuickButton>
                <QuickButton $w={12} aria-label="Customize toolbar">{icons.customise}</QuickButton>
              </QuickBar>
              <Tabs role="tablist">
                {mainTabs.map(([name, w]) => (
                  <Tab key={name} role="tab" $w={w} $active={name === "INSERT"} aria-selected={name === "INSERT"}>
                    {name}
                  </Tab>
                ))}
              </Tabs>
              <ContextTabs>
                <ContextTitle>TABLE TOOLS</ContextTitle>
                <ContextRow role="tablist">
                  <Tab role="tab" $w={66}>DESIGN</Tab>
                  <Tab role="tab" $w={75}>LAYOUT</Tab>
                </ContextRow>
              </ContextTabs>
              <HelpButton aria-label="Help">?</HelpButton>
            </TitleArea>
            <RibbonBar />
            <Band>
              <BandFill />
            </Band>
            <Body>
              <LeftStrip>
                <StripFill />
              </LeftStrip>
              <Canvas>
                <RulerRow>
                  <TabSelector aria-label="Tab selector">
                    <Svg w={15} h={14}>
                      <path d="M6 5v5h5" stroke="#5f5f5f" strokeWidth="2" />
                    </Svg>
                  </TabSelector>
                  <RulerBox>
                    <HorizontalRuler />
                  </RulerBox>
                </RulerRow>
                <PageRow>
                  <SideRuler>
                    <VerticalRuler />
                  </SideRuler>
                  <Document />
                </PageRow>
              </Canvas>
            </Body>
          </Word>
        </EditorPane>
        <SidePane>
          <PaneTitle>
            متن هوشمند
            {icons.pin}
          </PaneTitle>
          <PaneBody>
            <ComboFrame>
              <Combo aria-label="متن هوشمند" defaultValue="word">
                <option value="word">مایکروسافت وورد</option>
              </Combo>
              <ComboArrow>
                <Caret />
              </ComboArrow>
            </ComboFrame>
            <PaneLabel id="params-label">پارامترهای هوشمند</PaneLabel>
            <ListFrame>
              <Items role="listbox" aria-labelledby="params-label">
                <Item role="option" $latin $color="#f00">◄◄◄CrmObject.ExtendedP...</Item>
                <Item role="option" $color="#000">فاکتور</Item>
                <Item role="option" $color="#00f">اقلام فاکتور</Item>
              </Items>
              <ListScroll>
                <ListUp aria-label="Scroll up">
                  <Triangle dir="up" />
                </ListUp>
                <ListThumb />
              </ListScroll>
            </ListFrame>
          </PaneBody>
        </SidePane>
      </WorkArea>
      <Footer>
        <SaveButton>ذخیره و ارسال به سرور</SaveButton>
      </Footer>
    </Shell>
  );
}
